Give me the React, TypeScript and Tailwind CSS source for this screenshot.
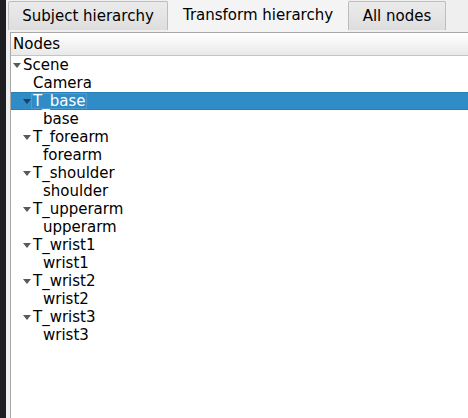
import React from "react";

type Row = { label: string; depth: number; arrow: boolean; selected?: boolean };

const rows: Row[] = [
  { label: "Scene", depth: 0, arrow: true },
  { label: "Camera", depth: 1, arrow: false },
  { label: "T_base", depth: 1, arrow: true, selected: true },
  { label: "base", depth: 2, arrow: false },
  { label: "T_forearm", depth: 1, arrow: true },
  { label: "forearm", depth: 2, arrow: false },
  { label: "T_shoulder", depth: 1, arrow: true },
  { label: "shoulder", depth: 2, arrow: false },
  { label: "T_upperarm", depth: 1, arrow: true },
  { label: "upperarm", depth: 2, arrow: false },
  { label: "T_wrist1", depth: 1, arrow: true },
  { label: "wrist1", depth: 2, arrow: false },
  { label: "T_wrist2", depth: 1, arrow: true },
  { label: "wrist2", depth: 2, arrow: false },
  { label: "T_wrist3", depth: 1, arrow: true },
  { label: "wrist3", depth: 2, arrow: false },
];

function Arrow({ white }: { white?: boolean }) {
  return (
    <svg width="8" height="5" viewBox="0 0 8 5" className="block">
      <polygon points="0,0 8,0 4,5" fill={white ? "#1f3f5a" : "#5a5a5a"} />
    </svg>
  );
}

export default function App() {
  return (
    <div
      className="flex h-[418px] w-[468px] overflow-hidden text-[15px] text-black"
      style={{ fontFamily: '"DejaVu Sans", sans-serif' }}
    >
      <div className="w-[6px] shrink-0 bg-[#1d1e21]" />
      <div className="flex flex-1 flex-col bg-[#efefef]">
        <div className="flex h-[32px] shrink-0 items-end pl-[2px]">
          <div className="mb-[2px] flex h-[29px] w-[160px] items-center justify-center rounded-t-[2px] border border-b-0 border-[#bdbdbd] bg-gradient-to-b from-[#ebebeb] to-[#dedede] pt-[1px]">
            Subject hierarchy
          </div>
          <div className="flex h-[32px] w-[180px] items-center justify-center bg-[#f4f4f4] pb-[1px]">
            Transform hierarchy
          </div>
          <div className="mb-[2px] flex h-[29px] w-[98px] items-center justify-center rounded-t-[2px] border border-b-0 border-[#bdbdbd] bg-gradient-to-b from-[#ebebeb] to-[#dedede] pt-[1px]">
            All nodes
          </div>
        </div>
        <div className="ml-[4px] flex flex-1 flex-col border-l border-t border-[#a8a8a8] bg-white">
          <div className="flex h-[23px] shrink-0 items-center border-b border-[#c4c4c4] bg-gradient-to-b from-[#ffffff] to-[#e9e9e9] pl-[2px]">
            Nodes
          </div>
          <div className="flex flex-col">
            {rows.map((r, i) => {
              const sel = !!r.selected;
              return (
                <div
                  key={i}
                  className={
                    "flex h-[18px] items-center " +
                    (sel ? "border-y border-[#2b7fb7] bg-[#308cc6] text-white" : "")
                  }
                  style={{ paddingLeft: 2 + r.depth * 10 }}
                >
                  <div className="flex w-[10px] shrink-0 items-center justify-start">
                    {r.arrow && <Arrow white={sel} />}
                  </div>
                  {sel ? (
                    <span className="-ml-[2px] border border-[#4f9bd0] px-[1px] leading-[14px]">
                      {r.label}
                    </span>
                  ) : (
                    <span className="leading-[16px]">{r.label}</span>
                  )}
                </div>
              );
            })}
          </div>
        </div>
      </div>
    </div>
  );
}
